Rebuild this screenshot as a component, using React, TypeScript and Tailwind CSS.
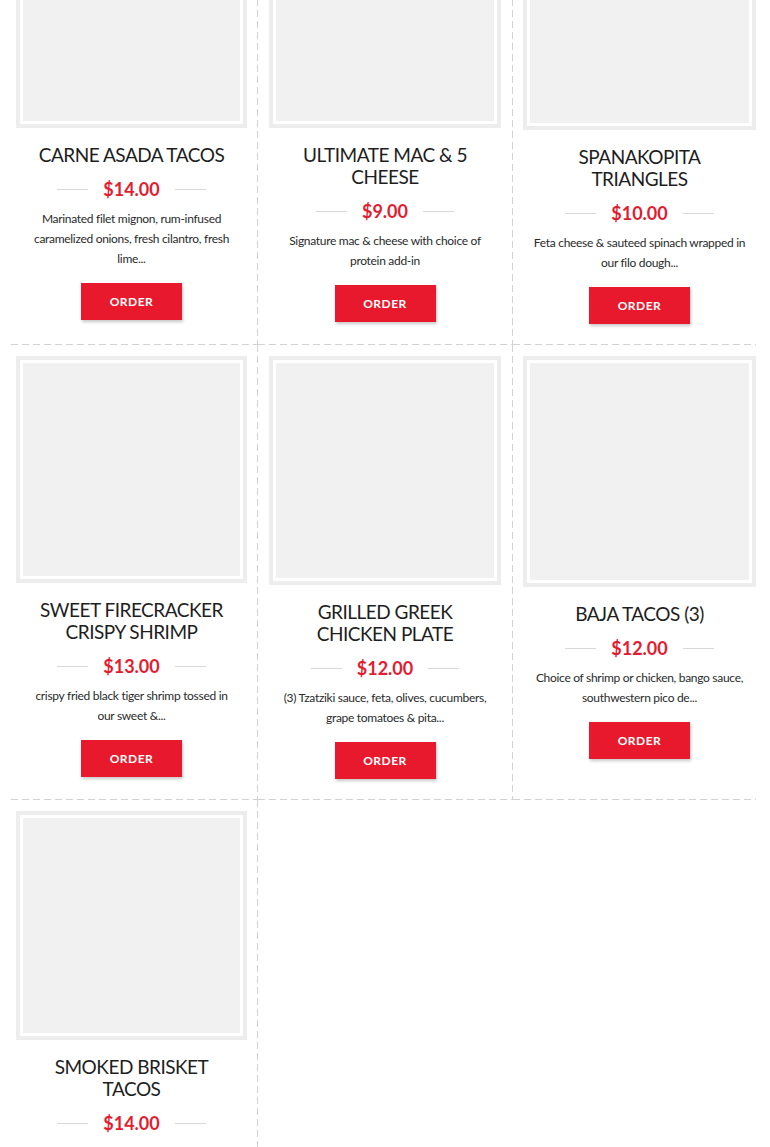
import React from "react";

type Item = {
  title: string[];
  price: string;
  desc: string[];
  imgH: number;
};

const rows: Item[][] = [
  [
    { title: ["CARNE ASADA TACOS"], price: "$14.00", desc: ["Marinated filet mignon, rum-infused", "caramelized onions, fresh cilantro, fresh", "lime..."], imgH: 228 },
    { title: ["ULTIMATE MAC & 5", "CHEESE"], price: "$9.00", desc: ["Signature mac & cheese with choice of", "protein add-in"], imgH: 228 },
    { title: ["SPANAKOPITA", "TRIANGLES"], price: "$10.00", desc: ["Feta cheese & sauteed spinach wrapped in", "our filo dough..."], imgH: 230 },
  ],
  [
    { title: ["SWEET FIRECRACKER", "CRISPY SHRIMP"], price: "$13.00", desc: ["crispy fried black tiger shrimp tossed in", "our sweet &..."], imgH: 227 },
    { title: ["GRILLED GREEK", "CHICKEN PLATE"], price: "$12.00", desc: ["(3) Tzatziki sauce, feta, olives, cucumbers,", "grape tomatoes & pita..."], imgH: 229 },
    { title: ["BAJA TACOS (3)"], price: "$12.00", desc: ["Choice of shrimp or chicken, bango sauce,", "southwestern pico de..."], imgH: 231 },
  ],
  [
    { title: ["SMOKED BRISKET", "TACOS"], price: "$14.00", desc: ["Slow smoked brisket, pickled onions,", "cilantro, salsa verde..."], imgH: 229 },
  ],
];

const colClass = [
  "pl-[5px] pr-[11px]",
  "pl-[11px] pr-[12px]",
  "pl-[10px] pr-0",
];

const lineRight =
  "[background-image:linear-gradient(to_right,#d2d2d2_7px,transparent_7px),linear-gradient(to_bottom,#d2d2d2_7px,transparent_7px)] [background-size:11px_1px,1px_11px] [background-position:left_bottom,right_top] [background-repeat:repeat-x,repeat-y]";
const lineBottom =
  "[background-image:linear-gradient(to_right,#d2d2d2_7px,transparent_7px)] [background-size:11px_1px] [background-position:left_bottom] [background-repeat:repeat-x]";

function Card({ item, col }: { item: Item; col: number }) {
  return (
    <div className={`${colClass[col]} pt-[11px] pb-[21px] ${col < 2 ? lineRight : lineBottom}`}>
      <div className="flex flex-col items-center">
        <div
          className="w-full border-4 border-[#ededed] bg-white p-[3px] flex"
          style={{ height: item.imgH }}
        >
          <div className="flex-1 bg-[#f1f1f1]" />
        </div>
        <h3 className="mt-[16px] text-center text-[19px] leading-[22px] tracking-[-0.5px] text-[#1e1e1e] font-normal whitespace-nowrap">
          {item.title.map((t, i) => (
            <div key={i}>{t}</div>
          ))}
        </h3>
        <div className="mt-[11px] h-[24px] flex items-center gap-[15px]">
          <span className="block w-[31px] h-[1px] bg-[#d8d8d8]" />
          <span className="text-[18px] font-bold text-[#e21d31] leading-[24px]">{item.price}</span>
          <span className="block w-[31px] h-[1px] bg-[#d8d8d8]" />
        </div>
        <p className="mt-[8px] text-center text-[12px] leading-[20px] tracking-[-0.3px] text-[#2a2a2a] whitespace-nowrap">
          {item.desc.map((d, i) => (
            <span key={i} className="block">{d}</span>
          ))}
        </p>
        <button className="mt-[14px] w-[101px] h-[37px] bg-[#e8192c] text-white text-[12px] font-bold tracking-[0.5px] shadow-[1px_2px_3px_rgba(0,0,0,0.22)]">
          ORDER
        </button>
      </div>
    </div>
  );
}

export default function App() {
  return (
    <div
      className="w-[770px] h-[1147px] overflow-hidden bg-white"
      style={{ fontFamily: "Lato, 'Open Sans', 'Liberation Sans', sans-serif" }}
    >
      <div className="ml-[11px] -mt-[111px] grid grid-cols-[247px_255px_243px] items-start">
        {rows.map((row, r) =>
          row.map((item, c) => (
            <div key={`${r}-${c}`} className="self-stretch flex flex-col [&>div]:flex-1">
              <Card item={item} col={c} />
            </div>
          ))
        )}
      </div>
    </div>
  );
}
